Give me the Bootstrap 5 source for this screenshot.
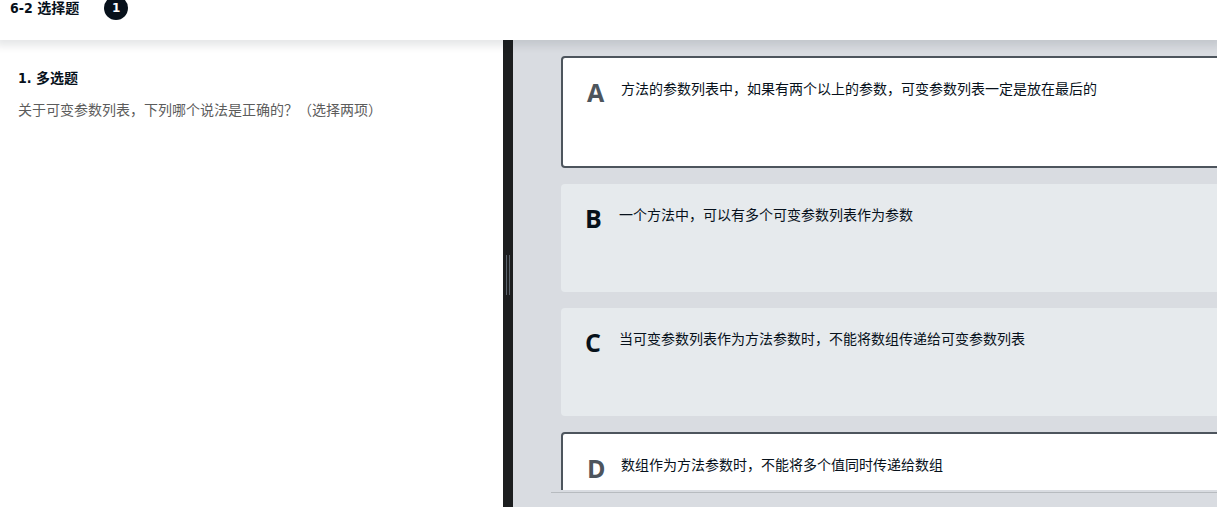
<!DOCTYPE html>
<html lang="zh-CN">
<head>
<meta charset="utf-8">
<meta name="viewport" content="width=device-width, initial-scale=1">
<title>6-2 选择题</title>
<link href="https://cdn.jsdelivr.net/npm/bootstrap@5.3.0/dist/css/bootstrap.min.css" rel="stylesheet">
<style>
  body { font: 14px/24px "Open Sans", "Noto Sans CJK SC", sans-serif; color: #07111b; }
  .topbar { height: 64px; margin-top: -24px; padding: 0 10px; gap: 25px; z-index: 2; box-shadow: 0 2px 8px 4px rgba(7, 17, 27, .1); }
  .title-text { font: bold 14px/24px "DejaVu Sans Condensed", "Noto Sans CJK SC", sans-serif; }
  .step { width: 24px; height: 24px; padding: 0; border: 0; font: bold 12px/24px "DejaVu Sans", sans-serif; color: #fff; background: #07111b; }
  .workspace { display: grid; grid-template-columns: 5fr 10px 7fr; min-height: 0; }
  .question { padding: 26px 18px; }
  .question p { color: #5c5c5c; }
  .splitter { background: #1c1e1f; }
  .grip { width: 4px; height: 40px; margin-top: 2px; border: solid #5a626b; border-width: 0 1px; }
  .answers { min-width: 0; min-height: 0; padding-left: 38px; background: #d9dce1; }
  .options { padding: 16px 0 0 10px; margin-bottom: 2px; }
  .option { box-sizing: content-box; min-height: 62px; margin: 0 -16px 16px 0; padding: 23px 24px; background: #e6eaed; border-radius: 4px; cursor: pointer; }
  .option:has(input:checked) { background: #fff; border: 2px solid #4d555d; }
  .option-key { width: 34px; margin-top: 3px; font-size: 25px; line-height: 16px; }
  .option:has(input:checked) .option-key { color: #4d555d; }
  .option-text { line-height: 16px; }
  .answer-foot { height: 15px; border-top: 1px solid #b7bbbf; }
</style>
<script src="https://cdn.jsdelivr.net/npm/bootstrap@5.3.0/dist/js/bootstrap.bundle.min.js"></script>
</head>
<body class="vh-100 overflow-hidden d-flex flex-column bg-white">
<header class="topbar d-flex align-items-center flex-shrink-0 position-relative bg-white">
  <h1 class="title-text m-0">6-2 选择题</h1>
  <button type="button" class="step rounded-circle">1</button>
</header>
<main class="workspace flex-grow-1">
  <section class="question">
    <h2 class="title-text" id="question-title">1. 多选题</h2>
    <p class="m-0">关于可变参数列表，下列哪个说法是正确的？（选择两项）</p>
  </section>
  <div class="splitter d-flex align-items-center justify-content-center" role="separator" aria-orientation="vertical"><span class="grip"></span></div>
  <section class="answers d-flex flex-column overflow-hidden">
    <div class="options flex-grow-1 overflow-hidden" role="group" aria-labelledby="question-title">
      <label class="option d-flex"><input class="visually-hidden" type="checkbox" checked><span class="option-key fw-bold flex-shrink-0">A</span><span class="option-text">方法的参数列表中，如果有两个以上的参数，可变参数列表一定是放在最后的</span></label>
      <label class="option d-flex"><input class="visually-hidden" type="checkbox"><span class="option-key fw-bold flex-shrink-0">B</span><span class="option-text">一个方法中，可以有多个可变参数列表作为参数</span></label>
      <label class="option d-flex"><input class="visually-hidden" type="checkbox"><span class="option-key fw-bold flex-shrink-0">C</span><span class="option-text">当可变参数列表作为方法参数时，不能将数组传递给可变参数列表</span></label>
      <label class="option d-flex"><input class="visually-hidden" type="checkbox" checked><span class="option-key fw-bold flex-shrink-0">D</span><span class="option-text">数组作为方法参数时，不能将多个值同时传递给数组</span></label>
    </div>
    <div class="answer-foot flex-shrink-0"></div>
  </section>
</main>
</body>
</html>
